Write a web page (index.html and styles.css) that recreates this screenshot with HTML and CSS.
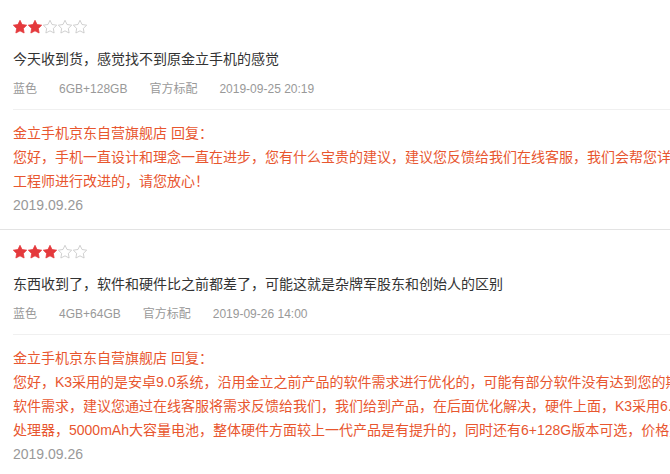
FILE: index.html
```html
<!DOCTYPE html>
<html lang="zh-CN">
<head>
    <meta charset="UTF-8">
    <meta name="viewport" content="width=device-width, initial-scale=1.0">
    <title>商品评价</title>
    <link rel="stylesheet" href="styles.css">
</head>
<body>
    <div class="comment-list">

        <div class="comment">
            <div class="comment-main">
                <div class="star-row">
                    <svg class="star on" viewBox="1.5 1.5 21 21"><path d="M12 2l3.09 6.26L22 9.27l-5 4.87 1.18 6.88L12 17.77l-6.18 3.25L7 14.14 2 9.27l6.91-1.01L12 2z"/></svg>
                    <svg class="star on" viewBox="1.5 1.5 21 21"><path d="M12 2l3.09 6.26L22 9.27l-5 4.87 1.18 6.88L12 17.77l-6.18 3.25L7 14.14 2 9.27l6.91-1.01L12 2z"/></svg>
                    <svg class="star" viewBox="1.5 1.5 21 21"><path d="M12 2l3.09 6.26L22 9.27l-5 4.87 1.18 6.88L12 17.77l-6.18 3.25L7 14.14 2 9.27l6.91-1.01L12 2z"/></svg>
                    <svg class="star" viewBox="1.5 1.5 21 21"><path d="M12 2l3.09 6.26L22 9.27l-5 4.87 1.18 6.88L12 17.77l-6.18 3.25L7 14.14 2 9.27l6.91-1.01L12 2z"/></svg>
                    <svg class="star" viewBox="1.5 1.5 21 21"><path d="M12 2l3.09 6.26L22 9.27l-5 4.87 1.18 6.88L12 17.77l-6.18 3.25L7 14.14 2 9.27l6.91-1.01L12 2z"/></svg>
                </div>
                <p class="comment-text">今天收到货，感觉找不到原金立手机的感觉</p>
                <div class="comment-meta">
                    <span>蓝色</span>
                    <span>6GB+128GB</span>
                    <span>官方标配</span>
                    <span>2019-09-25 20:19</span>
                </div>
            </div>
            <div class="reply">
                <div class="reply-name">金立手机京东自营旗舰店 回复：</div>
                <p class="reply-text">您好，手机一直设计和理念一直在进步，您有什么宝贵的建议，建议您反馈给我们在线客服，我们会帮您详细反馈给工程师进行改进的，请您放心！</p>
                <div class="reply-date">2019.09.26</div>
            </div>
        </div>

        <div class="comment">
            <div class="comment-main">
                <div class="star-row">
                    <svg class="star on" viewBox="1.5 1.5 21 21"><path d="M12 2l3.09 6.26L22 9.27l-5 4.87 1.18 6.88L12 17.77l-6.18 3.25L7 14.14 2 9.27l6.91-1.01L12 2z"/></svg>
                    <svg class="star on" viewBox="1.5 1.5 21 21"><path d="M12 2l3.09 6.26L22 9.27l-5 4.87 1.18 6.88L12 17.77l-6.18 3.25L7 14.14 2 9.27l6.91-1.01L12 2z"/></svg>
                    <svg class="star on" viewBox="1.5 1.5 21 21"><path d="M12 2l3.09 6.26L22 9.27l-5 4.87 1.18 6.88L12 17.77l-6.18 3.25L7 14.14 2 9.27l6.91-1.01L12 2z"/></svg>
                    <svg class="star" viewBox="1.5 1.5 21 21"><path d="M12 2l3.09 6.26L22 9.27l-5 4.87 1.18 6.88L12 17.77l-6.18 3.25L7 14.14 2 9.27l6.91-1.01L12 2z"/></svg>
                    <svg class="star" viewBox="1.5 1.5 21 21"><path d="M12 2l3.09 6.26L22 9.27l-5 4.87 1.18 6.88L12 17.77l-6.18 3.25L7 14.14 2 9.27l6.91-1.01L12 2z"/></svg>
                </div>
                <p class="comment-text">东西收到了，软件和硬件比之前都差了，可能这就是杂牌军股东和创始人的区别</p>
                <div class="comment-meta">
                    <span>蓝色</span>
                    <span>4GB+64GB</span>
                    <span>官方标配</span>
                    <span>2019-09-26 14:00</span>
                </div>
            </div>
            <div class="reply">
                <div class="reply-name">金立手机京东自营旗舰店 回复：</div>
                <p class="reply-text">您好，K3采用的是安卓9.0系统，沿用金立之前产品的软件需求进行优化的，可能有部分软件没有达到您的期望值的软件需求，建议您通过在线客服将需求反馈给我们，我们给到产品，在后面优化解决，硬件上面，K3采用6.53寸八核处理器，5000mAh大容量电池，整体硬件方面较上一代产品是有提升的，同时还有6+128G版本可选，价格更实惠。</p>
                <div class="reply-date">2019.09.26</div>
            </div>
        </div>

    </div>
</body>
</html>
```

FILE: styles.css
```css
html, body {
    margin: 0;
    overflow: hidden;
}
body {
    font-family: "Liberation Sans", "Noto Sans CJK SC", sans-serif;
    background-color: #fff;
    color: #333;
}
.comment-list {
    padding-top: 5px;
}
.comment {
    padding: 0 0 12px 13px;
    border-bottom: 1px solid #e3e3e3;
}
.comment-main {
    padding: 15px 0 10px;
    border-bottom: 1px solid #f0f0f0;
}
.star-row {
    display: flex;
    gap: 1px;
    height: 14px;
}
.star {
    width: 14px;
    height: 14px;
    fill: #fff;
    stroke: #c4c4c4;
    stroke-width: 1.2;
}
.star.on {
    fill: #e4393c;
    stroke: #e4393c;
}
.comment-text {
    margin: 13px 0 0;
    font-size: 14px;
    line-height: 24px;
    color: #333;
}
.comment-meta {
    display: flex;
    gap: 22px;
    margin-top: 8px;
    font-size: 12px;
    line-height: 20px;
    color: #999;
}
.reply {
    padding-top: 11px;
    font-size: 14px;
    line-height: 24px;
    color: #e8562f;
}
.reply-text {
    width: 718px;
    margin: 0;
}
.reply-date {
    color: #999;
}
```
